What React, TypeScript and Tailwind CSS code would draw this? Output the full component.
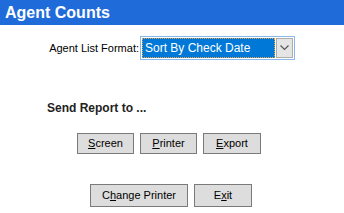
import React from "react";

function Btn({ children, className = "" }: { children: React.ReactNode; className?: string }) {
  return (
    <button
      className={`border border-[#7a7a7a] bg-[#dddddd] text-[11px] leading-none text-black ${className}`}
    >
      {children}
    </button>
  );
}

export default function App() {
  return (
    <div className="w-[344px] h-[213px] bg-white font-['Liberation_Sans',Arial,sans-serif] overflow-hidden">
      {/* Title bar */}
      <div className="h-[25px] bg-[#1f6bd9] px-[5px] flex items-center">
        <span className="text-white font-bold text-[16px] leading-none">Agent Counts</span>
      </div>

      {/* List format */}
      <div className="mt-[11px] flex items-center">
        <span className="w-[140px] text-right pr-[1px] text-[11px] text-black">Agent List Format:</span>
        <div className="flex items-center h-[24px] w-[155px] border border-[#8ab8ea] p-[1px]">
          <div className="flex-1 h-full bg-[#0078d7] border border-dotted border-[#f0a040] flex items-center px-[2px]">
            <span className="text-white text-[12px] leading-none">Sort By Check Date</span>
          </div>
          <div className="w-[17px] h-full ml-[1px] bg-[#e5e5e5] border border-[#adadad] flex items-center justify-center">
            <svg width="9" height="6" viewBox="0 0 9 6" fill="none">
              <path d="M0.5 0.5 L4.5 4.5 L8.5 0.5" stroke="#555" strokeWidth="1.1" />
            </svg>
          </div>
        </div>
      </div>

      {/* Send report */}
      <div className="mt-[39px] pl-[47px] text-[12px] font-bold text-[#222]">Send Report to ...</div>

      <div className="mt-[16px] flex gap-[6px] pl-[77px]">
        <Btn className="w-[57px] h-[21px]">
          <u>S</u>creen
        </Btn>
        <Btn className="w-[57px] h-[21px]">
          <u>P</u>rinter
        </Btn>
        <Btn className="w-[58px] h-[21px]">
          <u>E</u>xport
        </Btn>
      </div>

      <div className="mt-[30px] flex gap-[6px] pl-[90px]">
        <Btn className="w-[98px] h-[23px]">
          C<u>h</u>ange Printer
        </Btn>
        <Btn className="w-[58px] h-[23px]">
          E<u>x</u>it
        </Btn>
      </div>
    </div>
  );
}
